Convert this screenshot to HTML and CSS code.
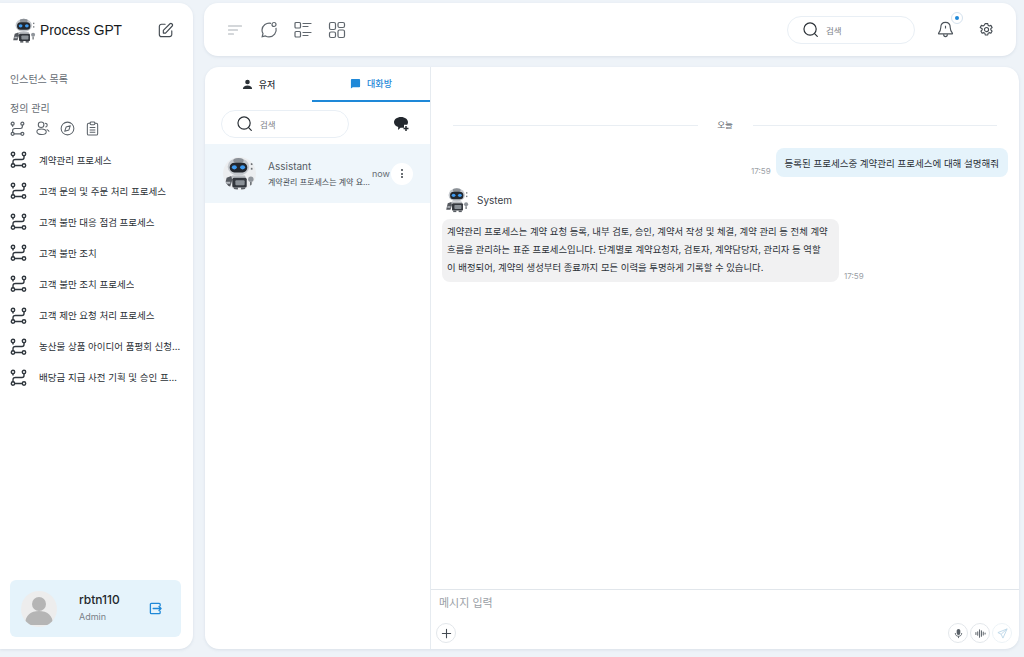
FILE: index.html
```html
<!DOCTYPE html>
<html lang="ko">
<head>
<meta charset="utf-8">
<title>Process GPT</title>
<link rel="stylesheet" href="styles.css">
</head>
<body>
<svg class="defs" width="0" height="0" aria-hidden="true">
  <defs>
    <symbol id="robot" viewBox="0 0 32 32">
      <ellipse cx="15" cy="9.500" rx="10.500" ry="8.500" fill="#c4c8cd"/>
      <ellipse cx="15" cy="3.500" rx="5" ry="2.500" fill="#8b9096"/>
      <rect x="6.500" y="5.500" width="17" height="9.500" rx="4.500" fill="#23272d"/>
      <ellipse cx="11" cy="10" rx="2.400" ry="2" fill="#3f9bf0"/>
      <ellipse cx="19" cy="10" rx="2.400" ry="2" fill="#3f9bf0"/>
      <rect x="27" y="6" width="1.600" height="1.800" fill="#6d7277"/>
      <rect x="27" y="10.500" width="1.600" height="1.800" fill="#6d7277"/>
      <path d="M9 18h12l1.500 2h-15z" fill="#b7bbc0"/>
      <rect x="9" y="20" width="14" height="9.500" rx="1.500" fill="#33373d"/>
      <rect x="12" y="22.500" width="9" height="5" rx="1" fill="#8a9096"/>
      <path d="M8 18.500 3.500 20 1.500 28.500h5.500l2-6z" fill="#55595f"/>
      <path d="M3 24h4v2H3z" fill="#b7bbc0"/>
      <circle cx="27" cy="21.500" r="2.600" fill="#90959b"/>
      <rect x="26.200" y="24" width="1.600" height="3.500" fill="#6d7277"/>
      <rect x="10.500" y="29.500" width="4" height="2" fill="#5a5f65"/>
      <rect x="17.500" y="29.500" width="4" height="2" fill="#5a5f65"/>
    </symbol>
    <symbol id="flow" viewBox="0 0 17 17">
      <g fill="none" stroke="currentColor" stroke-width="1.400" stroke-linecap="round" stroke-linejoin="round">
        <circle cx="3" cy="3" r="1.700"/>
        <circle cx="14" cy="3" r="1.700"/>
        <circle cx="3" cy="14.500" r="1.700"/>
        <circle cx="14" cy="14.500" r="1.700"/>
        <path d="M14 4.700v1.800q0 2-2 2H5.500q-2.500 0-2.500 2.500v1.800"/>
        <path d="M4.700 14.500h7.600"/>
        <path d="M3 4.700v1.300"/>
      </g>
    </symbol>
    <symbol id="search" viewBox="0 0 20 20">
      <circle cx="9.500" cy="9.500" r="7.200" fill="none" stroke="currentColor" stroke-width="1.400"/>
      <path d="M14.800 14.800 18 18" fill="none" stroke="currentColor" stroke-width="1.400" stroke-linecap="round"/>
    </symbol>
  </defs>
</svg>

<div class="app">
  <aside class="sidebar">
    <div class="brand">
      <svg class="brand-logo"><use href="#robot"/></svg>
      <span class="brand-name">Process GPT</span>
      <svg class="brand-edit" viewBox="0 0 18 18" fill="none" stroke="#444b52" stroke-width="1.300" stroke-linecap="round" stroke-linejoin="round">
        <path d="M8 2.500H4a2.500 2.500 0 0 0-2.500 2.500v9A2.500 2.500 0 0 0 4 16.500h9a2.500 2.500 0 0 0 2.500-2.500v-4"/>
        <path d="M6 12.500v-3L13.500 2a1.400 1.400 0 0 1 2 0l.5.500a1.400 1.400 0 0 1 0 2L8.500 12.500z"/>
      </svg>
    </div>
    <div class="side-label first">인스턴스 목록</div>
    <div class="side-label second">정의 관리</div>
    <div class="def-tools">
      <svg class="tool"><use href="#flow"/></svg>
      <svg class="tool" viewBox="0 0 16 16" fill="none" stroke="currentColor" stroke-width="1.100">
        <circle cx="6.500" cy="4" r="3"/><ellipse cx="7" cy="11.500" rx="5" ry="3"/><path d="M10.500 2.500c1.500 0 2.500 1 2.500 2s-1 2-2 2M12.500 9c1.500.5 2.500 1.300 2.500 2.500"/>
      </svg>
      <svg class="tool" viewBox="0 0 16 16" fill="none" stroke="currentColor" stroke-width="1.100">
        <circle cx="8" cy="8" r="6.800"/><path d="M11 5 9.500 9.500 5 11l1.500-4.500z" stroke-linejoin="round"/>
      </svg>
      <svg class="tool" viewBox="0 0 16 16" fill="none" stroke="currentColor" stroke-width="1.100" stroke-linejoin="round">
        <rect x="2.500" y="2.500" width="11" height="12.500" rx="1.500"/><rect x="5.500" y="1" width="5" height="3" rx="1" fill="#fff"/><path d="M5 7h6M5 9.500h6M5 12h6"/>
      </svg>
    </div>
    <ul class="proc-list">
      <li class="proc"><svg class="proc-icon"><use href="#flow"/></svg><span class="proc-name">계약관리 프로세스</span></li>
      <li class="proc"><svg class="proc-icon"><use href="#flow"/></svg><span class="proc-name">고객 문의 및 주문 처리 프로세스</span></li>
      <li class="proc"><svg class="proc-icon"><use href="#flow"/></svg><span class="proc-name">고객 불만 대응 점검 프로세스</span></li>
      <li class="proc"><svg class="proc-icon"><use href="#flow"/></svg><span class="proc-name">고객 불만 조치</span></li>
      <li class="proc"><svg class="proc-icon"><use href="#flow"/></svg><span class="proc-name">고객 불만 조치 프로세스</span></li>
      <li class="proc"><svg class="proc-icon"><use href="#flow"/></svg><span class="proc-name">고객 제안 요청 처리 프로세스</span></li>
      <li class="proc"><svg class="proc-icon"><use href="#flow"/></svg><span class="proc-name">농산물 상품 아이디어 품평회 신청 프로세스</span></li>
      <li class="proc"><svg class="proc-icon"><use href="#flow"/></svg><span class="proc-name">배당금 지급 사전 기획 및 승인 프로세스</span></li>
    </ul>
    <div class="profile">
      <div class="avatar">
        <svg viewBox="0 0 36 36"><circle cx="18" cy="13" r="7" fill="#b5b5b5"/><path d="M4 34c0-10 6-14 14-14s14 4 14 14z" fill="#b5b5b5"/></svg>
      </div>
      <div class="who"><div class="who-name">rbtn110</div><div class="who-role">Admin</div></div>
      <svg class="logout" viewBox="0 0 14 14" fill="none" stroke="#1e88d8" stroke-width="1.400" stroke-linejoin="round" stroke-linecap="round">
        <path d="M12 4V2.500a1 1 0 0 0-1-1H2.500a1 1 0 0 0-1 1v9a1 1 0 0 0 1 1H11a1 1 0 0 0 1-1V10"/><path d="M4.500 7h8.500M10.800 4.800 13 7l-2.200 2.200"/>
      </svg>
    </div>
  </aside>

  <div class="content">
    <header class="topbar">
      <svg class="top-icon menu" viewBox="0 0 14 10" fill="none" stroke="#a9afb5" stroke-width="1.100" stroke-linecap="round"><path d="M.5 1h13M.5 5h9M.5 9h5"/></svg>
      <svg class="top-icon" viewBox="0 0 18 18" fill="none" stroke="#5f666d" stroke-width="1.200">
        <path d="M11 2.300A7.300 7.300 0 0 0 2 9c0 1.500.3 2.500 1 3.500l-.8 3.200 3.300-.8c1 .6 2 1 3.500 1a7.300 7.300 0 0 0 7-9"/><circle cx="14" cy="3.500" r="2"/>
      </svg>
      <svg class="top-icon" viewBox="0 0 18 18" fill="none" stroke="#5f666d" stroke-width="1.200" stroke-linecap="round">
        <rect x="1" y="1.500" width="5.500" height="5.500" rx="1"/><rect x="1" y="10.500" width="5.500" height="5.500" rx="1"/><path d="M9 2.500h8M9 5.500h5M9 11.500h8M9 14.500h5"/>
      </svg>
      <svg class="top-icon" viewBox="0 0 18 18" fill="none" stroke="#5f666d" stroke-width="1.200">
        <rect x="1.500" y="1.500" width="6" height="7" rx="1.500"/><rect x="10" y="1.500" width="6.500" height="5" rx="1.500"/><rect x="1.500" y="11" width="6" height="5.500" rx="1.500"/><rect x="10" y="9" width="6.500" height="7.500" rx="1.500"/>
      </svg>
      <div class="spacer"></div>
      <div class="search top-search"><svg class="search-icon"><use href="#search"/></svg><span class="search-text">검색</span></div>
      <div class="bell">
        <svg viewBox="0 0 18 18" fill="none" stroke="#4d545b" stroke-width="1.200" stroke-linejoin="round">
          <path d="M9 1.500c-3.500 0-5 2.500-5 5.500 0 3-1.200 4.500-2.300 5.800-.3.400 0 .9.500.9h13.600c.5 0 .8-.5.500-.9C15.200 11.500 14 10 14 7c0-3-1.500-5.500-5-5.500z"/><path d="M7 14c0 1.500 1 2.500 2 2.500s2-1 2-2.500M9 5v3"/>
        </svg>
        <span class="bell-dot"></span>
      </div>
      <svg class="gear" viewBox="0 0 24 24" fill="none" stroke="#444b52" stroke-width="1.800" stroke-linejoin="round" stroke-linecap="round">
        <path d="M10 2.500h4l.6 2.800 1.700 1 2.700-.9 2 3.400-2.100 1.900v1.800l2.100 2-2 3.400-2.700-.9-1.700 1-.6 2.700h-4l-.6-2.700-1.700-1-2.700.9-2-3.400 2.100-2v-1.800L1.900 8.800l2-3.400 2.700.9 1.700-1z"/><circle cx="12" cy="12" r="3.300"/>
      </svg>
    </header>

    <main class="chat-card">
      <section class="rooms">
        <div class="tabs">
          <div class="tab">
            <svg class="tab-icon" viewBox="0 0 12 12" fill="#2a3036"><circle cx="6" cy="3.300" r="2.500"/><path d="M1 11c0-2.500 2-3.800 5-3.800s5 1.300 5 3.800z"/></svg>
            <span>유저</span>
          </div>
          <div class="tab active">
            <svg class="tab-icon" viewBox="0 0 12 12" fill="#1e88d8"><path d="M1 2a1 1 0 0 1 1-1h8a1 1 0 0 1 1 1v7a1 1 0 0 1-1 1H3l-2 1.500z"/></svg>
            <span>대화방</span>
          </div>
        </div>
        <div class="room-tools">
          <div class="search room-search"><svg class="search-icon"><use href="#search"/></svg><span class="search-text">검색</span></div>
          <svg class="new-chat" viewBox="0 0 16 16"><path d="M8 1c4 0 7 2.300 7 5.300 0 1-.3 1.800-.8 2.500H11v3H7.500L5 14l.2-3C2.800 10.300 1 8.500 1 6.300 1 3.300 4 1 8 1z" fill="#23282e"/><path d="M13 10v5M10.500 12.500h5" stroke="#23282e" stroke-width="1.500"/></svg>
        </div>
        <div class="room">
          <div class="room-avatar"><svg><use href="#robot"/></svg></div>
          <div class="room-body">
            <div class="room-title">Assistant</div>
            <div class="room-preview">계약관리 프로세스는 계약 요청 등록, 내부 검토</div>
          </div>
          <span class="room-time">now</span>
          <span class="room-more"><i></i><i></i><i></i></span>
        </div>
      </section>

      <section class="chat">
        <div class="messages">
          <div class="day"><span class="day-line"></span><span class="day-text">오늘</span><span class="day-line"></span></div>
          <div class="my-row">
            <span class="stamp">17:59</span>
            <div class="bubble mine">등록된 프로세스중 계약관리 프로세스에 대해 설명해줘</div>
          </div>
          <div class="sender"><svg class="sender-icon"><use href="#robot"/></svg><span>System</span></div>
          <div class="their-row">
            <div class="bubble theirs">계약관리 프로세스는 계약 요청 등록, 내부 검토, 승인, 계약서 작성 및 체결, 계약 관리 등 전체 계약<br>흐름을 관리하는 표준 프로세스입니다. 단계별로 계약요청자, 검토자, 계약담당자, 관리자 등 역할<br>이 배정되어, 계약의 생성부터 종료까지 모든 이력을 투명하게 기록할 수 있습니다.</div>
            <span class="stamp">17:59</span>
          </div>
        </div>
        <div class="composer">
          <div class="placeholder">메시지 입력</div>
          <div class="composer-actions">
            <span class="round-btn"><svg viewBox="0 0 12 12" fill="none" stroke="#444b52" stroke-width="1.200" stroke-linecap="round"><path d="M6 1.500v9M1.500 6h9"/></svg></span>
            <span class="spacer"></span>
            <span class="round-btn"><svg viewBox="0 0 12 12" fill="#5a6168"><rect x="4" y="1" width="4" height="6.500" rx="2"/><path d="M2.500 5.500c0 2.500 1.500 3.500 3.500 3.500s3.500-1 3.500-3.500" fill="none" stroke="#5a6168"/><rect x="5.500" y="9" width="1" height="2"/></svg></span>
            <span class="round-btn"><svg viewBox="0 0 12 12" fill="none" stroke="#5a6168" stroke-width="1.100" stroke-linecap="round"><path d="M1 5v2M3 4v4M5 2v8M7 3v6M9 4.500v3M11 5.500v1"/></svg></span>
            <span class="round-btn faint"><svg viewBox="0 0 12 12" fill="none" stroke="#bcd6e8" stroke-width="1" stroke-linejoin="round"><path d="M11 1 1 5l3.500 1.800L6.500 11zM11 1 4.500 6.800"/></svg></span>
          </div>
        </div>
      </section>
    </main>
  </div>
</div>
</body>
</html>
```
FILE: styles.css
```css
* { box-sizing: border-box; }
html, body { margin: 0; height: 100%; }
body {
  background: #eef3f8;
  font-family: Inter, "Noto Sans CJK KR", "Liberation Sans", sans-serif;
  color: #2a3036;
  overflow: hidden;
}
.defs { position: absolute; }
.app {
  display: grid;
  grid-template-columns: 193px 1fr;
  column-gap: 11px;
  height: 657px;
  padding: 3px 5px 8px 0;
}
.sidebar {
  background: #fff;
  border-radius: 0 14px 14px 0;
  box-shadow: 0 1px 3px rgba(120, 140, 165, .18);
  display: flex;
  flex-direction: column;
  padding: 14px 12px 12px 10px;
  min-height: 0;
}
.brand { display: flex; align-items: center; height: 26px; }
.brand-logo { width: 25px; height: 25px; margin: 0 3px 0 2px; flex: none; }
.brand-name { font-size: 13.800px; font-weight: 400; color: #16191d; font-family: "Liberation Sans", sans-serif; flex: 1; }
.brand-edit { width: 16px; height: 16px; margin-right: 7px; flex: none; }
.side-label { font-size: 10px; color: #666c73; line-height: 14px; }
.side-label.first { margin-top: 29px; }
.side-label.second { margin-top: 15px; }
.def-tools { display: flex; gap: 10px; margin-top: 6px; color: #5a6168; }
.tool { width: 15px; height: 15px; flex: none; }
.proc-list { list-style: none; margin: 8px 0 0; padding: 0; display: flex; flex-direction: column; }
.proc { display: flex; align-items: center; height: 31.100px; gap: 12px; }
.proc-icon { width: 17px; height: 17px; color: #2f363d; flex: none; }
.proc-name { font-size: 9.500px; color: #2a3036; white-space: nowrap; overflow: hidden; text-overflow: ellipsis; }
.profile {
  margin-top: auto;
  height: 57px;
  background: #e5f3fb;
  border-radius: 6px;
  display: flex;
  align-items: center;
  padding: 0 19px 0 11px;
}
.avatar { width: 36px; height: 36px; border-radius: 50%; background: #ededed; overflow: hidden; flex: none; }
.avatar svg { width: 36px; height: 36px; display: block; }
.who { margin-left: 22px; flex: 1; padding-bottom: 2px; }
.who-name { font-size: 12px; font-weight: 500; color: #22272c; line-height: 16px; }
.who-role { font-size: 9px; color: #7a8087; line-height: 14px; margin-top: 2px; }
.logout { width: 13px; height: 13px; flex: none; }

.content { display: flex; flex-direction: column; gap: 11px; min-width: 0; }
.topbar {
  height: 53px;
  margin-right: 3px;
  background: #fff;
  border-radius: 14px;
  box-shadow: 0 1px 3px rgba(120, 140, 165, .18);
  display: flex;
  align-items: center;
  padding: 0 22px 0 24px;
  gap: 16px;
  flex: none;
}
.top-icon { width: 18px; height: 18px; flex: none; }
.top-icon.menu { width: 14px; height: 10px; margin-right: 2px; }
.spacer { flex: 1; }
.search {
  display: flex;
  align-items: center;
  background: #fff;
  border: 1px solid #e9eff5;
  border-radius: 14px;
  height: 28px;
  width: 128px;
  padding-left: 14px;
  color: #2a3036;
}
.search-icon { width: 17px; height: 17px; flex: none; }
.search-text { font-size: 8.500px; color: #7d8389; margin-left: 7px; }
.top-search { margin-right: 6px; }
.bell { position: relative; width: 17px; height: 17px; flex: none; }
.bell svg { width: 17px; height: 17px; display: block; }
.bell-dot {
  position: absolute;
  top: -9px;
  right: -9px;
  width: 12px;
  height: 12px;
  border-radius: 50%;
  background: #fff;
  border: 1px solid #d5e2ee;
}
.bell-dot::after {
  content: "";
  position: absolute;
  left: 3px;
  top: 3px;
  width: 4px;
  height: 4px;
  border-radius: 50%;
  background: #1e88d8;
}
.gear { width: 15px; height: 15px; margin-left: 9px; flex: none; }

.chat-card {
  flex: 1;
  min-height: 0;
  margin-left: 1px;
  background: #fff;
  border-radius: 14px;
  box-shadow: 0 1px 3px rgba(120, 140, 165, .18);
  display: grid;
  grid-template-columns: 226px 1fr;
  overflow: hidden;
}
.rooms { border-right: 1px solid #e6ebf0; display: flex; flex-direction: column; min-width: 0; }
.tabs { display: grid; grid-template-columns: 107px 118px; height: 35px; }
.tab { display: flex; align-items: center; justify-content: center; gap: 6px; font-size: 9px; font-weight: 500; color: #2a3036; }
.tab.active { color: #1e88d8; border-bottom: 2px solid #1e88d8; }
.tab-icon { width: 11px; height: 11px; flex: none; }
.room-tools { display: flex; align-items: center; height: 42px; padding: 1px 21px 0 16px; justify-content: space-between; }
.room-search { width: 128px; }
.new-chat { width: 16px; height: 16px; flex: none; }
.room {
  height: 59px;
  background: #eff6fb;
  display: flex;
  align-items: center;
  padding: 0 18px 0 18px;
}
.room-avatar { width: 33px; height: 33px; border-radius: 50%; overflow: hidden; background: #eceef0; flex: none; }
.room-avatar svg { width: 33px; height: 33px; display: block; }
.room-body { margin-left: 12px; width: 102px; flex: none; min-width: 0; }
.room-title { font-size: 10px; color: #555c63; line-height: 14px; }
.room-preview { font-size: 8px; color: #444b52; line-height: 13px; margin-top: 3px; white-space: nowrap; overflow: hidden; text-overflow: ellipsis; }
.room-time { font-size: 9px; font-weight: 400; color: #666c73; margin-left: 2px; }
.room-more { width: 22px; height: 22px; border-radius: 50%; background: #fff; margin-left: 1px; display: flex; flex-direction: column; align-items: center; justify-content: center; gap: 1.500px; flex: none; }
.room-more i { display: block; width: 2px; height: 2px; border-radius: 50%; background: #3a4047; }

.chat { display: flex; flex-direction: column; min-width: 0; }
.messages { flex: 1; padding: 51px 11px 0 11px; display: flex; flex-direction: column; min-height: 0; }
.day { display: flex; align-items: center; padding: 0 11px; }
.day-line { flex: 1; height: 1px; background: #e9eef3; }
.day-text { font-size: 8.500px; color: #666c73; width: 55px; text-align: center; line-height: 14px; }
.my-row { display: flex; justify-content: flex-end; align-items: flex-end; gap: 5px; margin-top: 16px; }
.stamp { font-size: 8px; color: #9aa0a6; line-height: 12px; }
.bubble { font-size: 9.500px; color: #2a3036; }
.mine { background: #e5f3fb; border-radius: 8px; height: 29px; padding: 0 9px; display: flex; align-items: center; white-space: nowrap; }
.sender { display: flex; align-items: center; gap: 7px; font-size: 10px; color: #3a4047; margin-top: 9px; height: 28px; padding-left: 3px; }
.sender-icon { width: 25px; height: 26px; flex: none; }
.their-row { display: flex; align-items: flex-end; gap: 5px; margin-top: 5px; }
.theirs { background: #f1f1f2; border-radius: 8px; width: 397px; padding: 4px 5px 5px 5px; font-size: 9.400px; line-height: 18px; }
.composer { height: 60px; border-top: 1px solid #e1e6eb; padding: 0 7px 6px 5px; display: flex; flex-direction: column; flex: none; }
.placeholder { font-size: 11px; color: #9aa0a6; margin: 5px 0 0 3px; line-height: 16px; }
.composer-actions { display: flex; align-items: center; gap: 2px; margin-top: auto; }
.round-btn { width: 20px; height: 20px; border-radius: 50%; border: 1px solid #e3e7eb; display: flex; align-items: center; justify-content: center; background: #fff; flex: none; }
.round-btn svg { width: 11px; height: 11px; display: block; }
.round-btn.faint { border-color: #edf3f7; }
```
